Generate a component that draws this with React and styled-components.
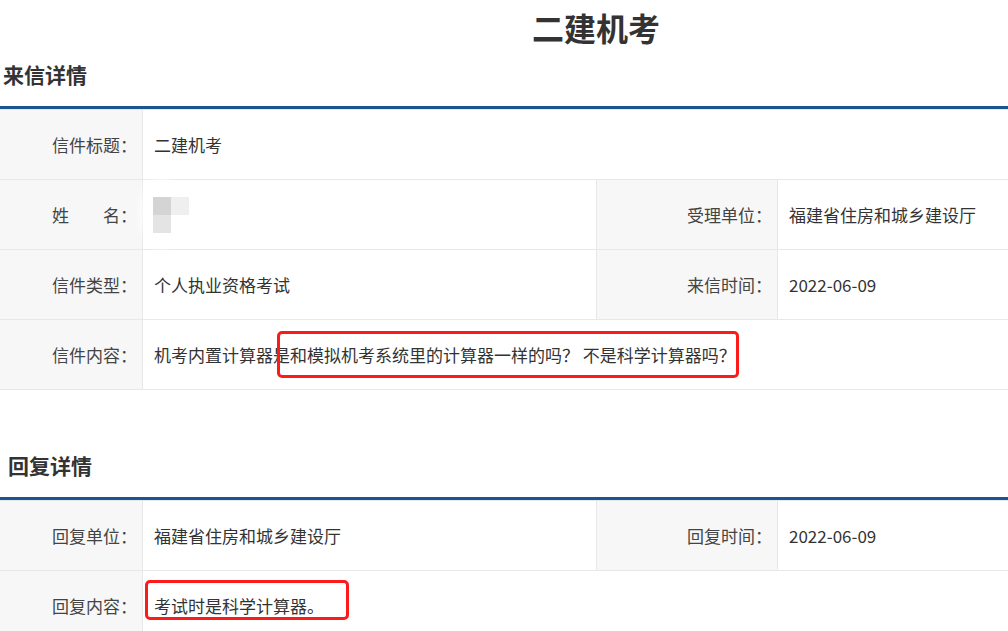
import React from 'react';
import styled, { createGlobalStyle } from 'styled-components';

const GlobalStyle = createGlobalStyle`
    body {
        margin: 0;
        background: #fff;
        font-family: "Noto Sans CJK SC", "Microsoft YaHei", sans-serif;
        color: #333;
    }
`

const Page = styled.div`
    width: 1008px;
    height: 631px;
    overflow: hidden;
`

const Title = styled.h1`
    margin: 0;
    height: 56px;
    line-height: 54px;
    padding-left: 184px;
    text-align: center;
    font-size: 32px;
    font-weight: 700;
    color: #333;
`

const Section = styled.section`
    margin-top: ${props => props.$gap || 0}px;
`

const SectionTitle = styled.h2`
    margin: 0;
    height: 50px;
    line-height: 36px;
    padding-left: ${props => props.$indent}px;
    font-size: 21px;
    font-weight: 700;
    color: #333;
    border-bottom: 3px solid #1b5495;
`

const Table = styled.div`
    display: grid;
    grid-template-columns: 143px 454px 181px 1fr;
    grid-auto-rows: 70px;
    border-top: 1px solid #e8e8e8;
    font-size: 17px;
`

const Label = styled.div`
    display: flex;
    align-items: center;
    justify-content: flex-end;
    padding-right: 5px;
    color: #444;
    background: #f7f7f7;
    border-right: 1px solid #e8e8e8;
    border-bottom: 1px solid #e8e8e8;
    white-space: nowrap;
`

const Value = styled.div`
    position: relative;
    display: flex;
    align-items: center;
    padding-left: 11px;
    grid-column: ${props => props.$wide ? 'span 3' : 'auto'};
    border-right: ${props => props.$divider ? '1px solid #e8e8e8' : 'none'};
    border-bottom: 1px solid #e8e8e8;
    white-space: nowrap;
`

const Mark = styled.span`
    position: absolute;
    left: ${props => props.$left}px;
    top: ${props => props.$top}px;
    width: ${props => props.$width}px;
    height: ${props => props.$height}px;
    border: 3px solid #fb1b1b;
    border-radius: 5px;
    box-sizing: border-box;
    pointer-events: none;
`

const Redacted = styled.svg`
    position: absolute;
    left: -6px;
    top: -7px;
`

function Mosaic() {
    return (
        <Redacted width="60" height="84" viewBox="0 0 60 84">
            <defs>
                <filter id="soft" x="-30%" y="-30%" width="160%" height="160%">
                    <feGaussianBlur stdDeviation="4" />
                </filter>
            </defs>
            <ellipse cx="24" cy="40" rx="20" ry="34" fill="#fff" filter="url(#soft)" />
            <rect x="16" y="24" width="18" height="18" fill="#d4d4d4" />
            <rect x="34" y="24" width="18" height="18" fill="#efefef" />
            <rect x="16" y="42" width="18" height="18" fill="#e4e4e4" />
        </Redacted>
    )
}

function App() {
    return (
        <Page>
            <GlobalStyle />
            <Title>二建机考</Title>

            <Section>
                <SectionTitle $indent={3}>来信详情</SectionTitle>
                <Table>
                    <Label>信件标题：</Label>
                    <Value $wide>二建机考</Value>

                    <Label>姓&emsp;&emsp;名：</Label>
                    <Value $divider><Mosaic /></Value>
                    <Label>受理单位：</Label>
                    <Value>福建省住房和城乡建设厅</Value>

                    <Label>信件类型：</Label>
                    <Value $divider>个人执业资格考试</Value>
                    <Label>来信时间：</Label>
                    <Value>2022-06-09</Value>

                    <Label>信件内容：</Label>
                    <Value $wide>
                        机考内置计算器是和模拟机考系统里的计算器一样的吗？ 不是科学计算器吗？
                        <Mark $left={134} $top={11} $width={462} $height={47} />
                    </Value>
                </Table>
            </Section>

            <Section $gap={57}>
                <SectionTitle $indent={8}>回复详情</SectionTitle>
                <Table>
                    <Label>回复单位：</Label>
                    <Value $divider>福建省住房和城乡建设厅</Value>
                    <Label>回复时间：</Label>
                    <Value>2022-06-09</Value>

                    <Label>回复内容：</Label>
                    <Value $wide>
                        考试时是科学计算器。
                        <Mark $left={2} $top={9} $width={204} $height={40} />
                    </Value>
                </Table>
            </Section>
        </Page>
    );
}

export default App;
